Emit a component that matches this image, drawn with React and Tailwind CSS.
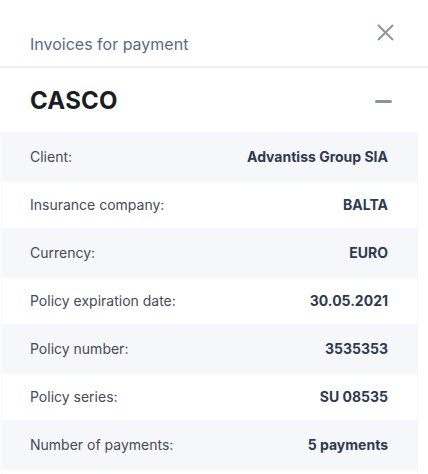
const ROWS = [
  { label: 'Client:', value: 'Advantiss Group SIA' },
  { label: 'Insurance company:', value: 'BALTA' },
  { label: 'Currency:', value: 'EURO' },
  { label: 'Policy expiration date:', value: '30.05.2021' },
  { label: 'Policy number:', value: '3535353' },
  { label: 'Policy series:', value: 'SU 08535' },
  { label: 'Number of payments:', value: '5 payments' },
  { label: '', value: '' },
];

const App = () => {
  return (
    <div
      className="w-[428px] h-[474px] overflow-hidden bg-white"
      style={{ fontFamily: 'Inter, "Noto Sans", sans-serif' }}
    >
      <div className="h-[66px] flex items-start justify-between pl-[30px] pr-[34px]">
        <h1 className="mt-[32px] text-[16px] leading-[24px] text-[#5b6a84]">Invoices for payment</h1>
        <button type="button" className="mt-[24px] text-[#8a94a5]" aria-label="Close">
          <svg width="17" height="17" viewBox="0 0 17 17" fill="none" stroke="currentColor" strokeWidth="2">
            <path d="M1 1l15 15M16 1L1 16" />
          </svg>
        </button>
      </div>
      <div className="h-[2px] bg-[#eeeff5]" />

      <div className="h-[64px] flex items-center justify-between pl-[30px] pr-[36px]">
        <h2 className="text-[24px] leading-[30px] font-bold text-[#1a1d24] pt-[2px] tracking-[0.01em]">CASCO</h2>
        <span className="block w-[17px] h-[3px] rounded-sm bg-[#8a94a5] mt-[2px]" />
      </div>

      <div className="w-[417px] ml-px bg-[#f6f7fb]">
        {ROWS.map((row, index) => (
          <div
            key={index}
            className={`flex items-center justify-between text-[14px] leading-[20px] ${
              index % 2 === 0 ? 'h-[50px] pl-[29px] pr-[30px]' : 'h-[46px] bg-white mx-px pl-[28px] pr-[29px]'
            }`}
          >
            <span className="text-[#454a56]">{row.label}</span>
            <span className="font-bold text-[#2e3a4f]">{row.value}</span>
          </div>
        ))}
      </div>
    </div>
  );
};

export default App;
